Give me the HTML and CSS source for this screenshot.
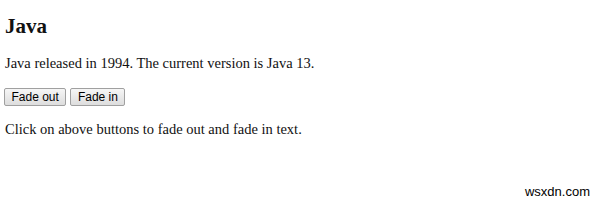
FILE: index.html
```html
<!DOCTYPE html>
<html>
<head>
<meta charset="utf-8">
<link rel="stylesheet" href="styles.css">
</head>
<body>
<div class="page">
  <h2 class="title">Java</h2>
  <p class="text">Java released in 1994. The current version is Java 13.</p>
  <div class="buttons">
    <button class="btn">Fade out</button>
    <button class="btn">Fade in</button>
  </div>
  <p class="text">Click on above buttons to fade out and fade in text.</p>
</div>
<div class="watermark">wsxdn.com</div>
</body>
</html>
```
FILE: styles.css
```css
html, body {
  margin: 0;
  padding: 0;
  background: #ffffff;
}
body {
  width: 600px;
  height: 202px;
  overflow: hidden;
  position: relative;
  font-family: "Liberation Serif", "Times New Roman", serif;
  color: #111;
}
.page {
  padding: 0 5px;
}
.title {
  font-size: 21px;
  font-weight: bold;
  margin: 0;
  padding-top: 14px;
  line-height: 24px;
}
.text {
  font-size: 14.5px;
  line-height: 17px;
  margin: 0;
}
.title + .text {
  margin-top: 17px;
}
.buttons {
  display: flex;
  gap: 4px;
  margin-top: 16px;
  margin-left: -1px;
}
.btn {
  font-family: "Liberation Sans", Arial, sans-serif;
  font-size: 12px;
  color: #000;
  height: 18px;
  padding: 0 6.5px;
  border: 1px solid #a0a0a0;
  border-radius: 2px;
  background: linear-gradient(#f6f6f6, #dddddd);
  line-height: 16px;
}
.buttons + .text {
  margin-top: 15px;
}
.watermark {
  position: absolute;
  right: 10px;
  bottom: 3px;
  font-family: "Liberation Sans", Arial, sans-serif;
  font-size: 13px;
  color: #000;
}
```
